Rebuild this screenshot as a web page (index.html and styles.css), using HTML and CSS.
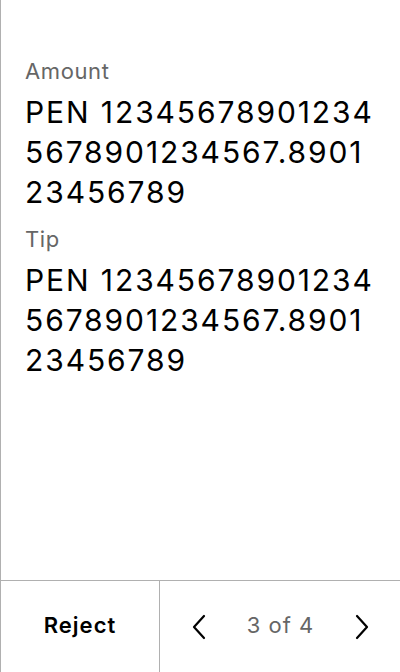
FILE: index.html
```html
<!DOCTYPE html>
<html>
<head>
<meta charset="utf-8">
<link rel="stylesheet" href="styles.css">
</head>
<body>
<div class="screen">
  <main class="content">
    <section class="field">
      <div class="label">Amount</div>
      <div class="value">PEN 123456789012345678901234567.890123456789</div>
    </section>
    <section class="field">
      <div class="label">Tip</div>
      <div class="value">PEN 123456789012345678901234567.890123456789</div>
    </section>
  </main>
  <footer class="footer">
    <button class="reject">Reject</button>
    <div class="pager">
      <button class="nav" aria-label="Previous">
        <svg width="16" height="26" viewBox="0 0 16 26"><path d="M13 2 L3 13 L13 24" fill="none" stroke="#000" stroke-width="2.2" stroke-linecap="round" stroke-linejoin="round"/></svg>
      </button>
      <span class="count">3 of 4</span>
      <button class="nav" aria-label="Next">
        <svg width="16" height="26" viewBox="0 0 16 26"><path d="M3 2 L13 13 L3 24" fill="none" stroke="#000" stroke-width="2.2" stroke-linecap="round" stroke-linejoin="round"/></svg>
      </button>
    </div>
  </footer>
</div>
</body>
</html>
```
FILE: styles.css
```css
html, body {
  margin: 0;
  padding: 0;
  background: #fff;
}
body {
  font-family: Inter, "Noto Sans", sans-serif;
  color: #000;
}
.screen {
  width: 400px;
  height: 672px;
  box-sizing: border-box;
  border-left: 1px solid #b0b0b0;
  display: flex;
  flex-direction: column;
}
.content {
  flex: 1;
  padding: 57px 20px 0 24px;
}
.field {
  display: flex;
  flex-direction: column;
}
.field + .field {
  margin-top: 13px;
}
.label {
  font-size: 22px;
  line-height: 28px;
  letter-spacing: 0.6px;
  color: #666;
}
.value {
  margin-top: 7px;
  font-size: 30px;
  line-height: 40px;
  letter-spacing: 1.9px;
  word-break: break-all;
}
.footer {
  height: 92px;
  box-sizing: border-box;
  border-top: 1px solid #b0b0b0;
  display: grid;
  grid-template-columns: 159px 1fr;
}
button {
  font-family: inherit;
  background: none;
  border: 0;
  padding: 0;
  margin: 0;
  color: #000;
}
.reject {
  font-size: 22px;
  font-weight: 600;
  letter-spacing: 1px;
  padding-bottom: 4px;
  border-right: 1px solid #b0b0b0;
}
.pager {
  display: flex;
  align-items: center;
  justify-content: space-between;
  padding: 0 30px 0 31px;
}
.nav {
  display: flex;
  align-items: center;
  justify-content: center;
  width: 16px;
  height: 26px;
}
.count {
  font-size: 22px;
  letter-spacing: 1px;
  padding-bottom: 3px;
  color: #666;
}
```
